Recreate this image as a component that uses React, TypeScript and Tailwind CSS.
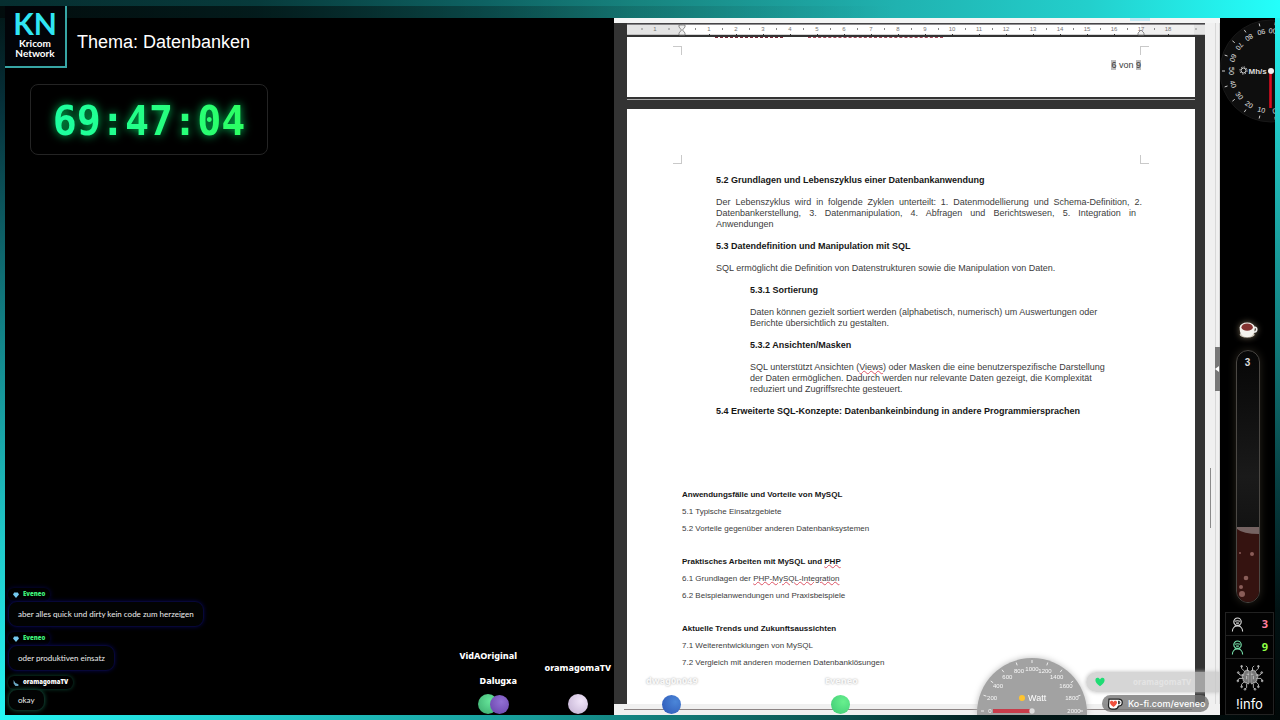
import React from "react";

const sans = "font-['Liberation_Sans',Arial,sans-serif]";
const ui = "font-['Noto_Sans','Open_Sans',sans-serif]";

function Logo() {
  return (
    <div className="absolute left-[5px] top-[6px] z-10 flex h-[62px] w-[62px] flex-col items-center border-b-2 border-r-2 border-[#37a5a5] bg-[#020408] font-['Lato',sans-serif] font-bold text-white">
      <span className="mt-[2px] text-[30px] leading-[30px] text-[#30e6f4]">KN</span>
      <span className="text-[10px] leading-[10px]">Kricom</span>
      <span className="text-[10px] leading-[10px]">Network</span>
    </div>
  );
}

function Ruler() {
  return (
    <svg viewBox="0 0 578 14" className="block h-[14px] w-full" preserveAspectRatio="xMinYMid slice" aria-hidden="true">
      <rect width="578" height="14" fill="#e4e4e4" />
      <rect x="55" y="1" width="459" height="11" fill="#fff" />
      <rect x="514" y="1" width="53" height="11" fill="#f0f0f0" />
      <rect y="0" width="578" height="1.6" fill="#474548" />
      <rect y="11.8" width="578" height="2.2" fill="#333" />
      {Array.from({ length: 18 }, (_, i) => i + 1).map((n) => (
        <g key={n}>
          <text x={55 + n * 27} y="8" textAnchor="middle" fontSize="6" fill="#777" fontFamily="Liberation Sans">
            {n}
          </text>
          <rect x={55 + n * 27 - 14} y="5" width="1" height="2" fill="#888" />
          <rect x={55 + n * 27} y="11" width="1" height="1" fill="#333" />
        </g>
      ))}
      <text x="28" y="8" textAnchor="middle" fontSize="6" fill="#777" fontFamily="Liberation Sans">1</text>
      <path d="M15 5v2M42 5v2M569 5v2" stroke="#888" />
      <path d="M52 2h6v2l-2.500 3 2.500 3v2h-6v-2l2.500-3-2.500-3z" fill="#eee" stroke="#777" strokeWidth=".8" />
      <path d="M511 12v-2l3-3 3 3v2z" fill="#eee" stroke="#777" strokeWidth=".8" />
    </svg>
  );
}

function Corner({ className }: { className: string }) {
  return <span className={`block size-[9px] border-[#c9c9c9] ${className}`} />;
}

const typo = "underline decoration-[#dd5566] decoration-wavy decoration-1 underline-offset-0";

function DocumentView() {
  return (
    <section className={`relative flex min-w-0 flex-col overflow-hidden bg-[#f0f0f0] text-[#3c3c3c] ${sans}`}>
      <div className="h-[5px] shrink-0 bg-[#f4f5f5]">
        <div className="ml-auto mr-[70px] h-[3px] w-[20px] bg-[#c2e8f3]" />
      </div>
      <div className="flex flex-1">
        <div className="flex min-w-0 flex-1 flex-col bg-[#333]">
          <div className="ml-[13px]">
            <Ruler />
          </div>
          <div className="ml-[13px] mr-[10px] flex h-[60px] shrink-0 flex-col bg-white px-[46px]">
            <div className="ml-[42px] flex h-[2px] gap-[25px]">
              <span className="w-[68px] border-t border-dashed border-[#7a2a3a]" />
              <span className="w-[135px] border-t border-dashed border-[#a4485a]" />
            </div>
            <div className="mt-[7px] flex justify-between">
              <Corner className="border-r border-t" />
              <Corner className="border-l border-t" />
            </div>
            <p className="mt-[5px] pr-[8px] text-right text-[9px] leading-[11px]">
              <span className="bg-[#bdbdbd]">6</span> von <span className="bg-[#bdbdbd]">9</span>
            </p>
          </div>
          <div className="ml-[13px] mr-[10px] mt-[2px] h-px bg-[#aaa]" />
          <article className="ml-[13px] mr-[10px] mt-[9px] flex-1 bg-white px-[46px] pt-[46px]">
            <div className="flex justify-between">
              <Corner className="border-b border-r" />
              <Corner className="border-b border-l" />
            </div>
            <div className="ml-[43px] w-[426px] whitespace-nowrap pt-[11px] text-[9px] leading-[11px] [&_h2]:font-bold [&_h2]:text-[#161616] [&_h3]:font-bold [&_h3]:text-[#161616]">
              <h2>5.2 Grundlagen und Lebenszyklus einer Datenbankanwendung</h2>
              <div className="mt-[11px]">
                <p className="[text-align-last:justify]">
                  Der Lebenszyklus wird in folgende Zyklen unterteilt: 1. Datenmodellierung und Schema-Definition, 2.
                </p>
                <p className="mr-[6px] [text-align-last:justify]">
                  Datenbankerstellung, 3. Datenmanipulation, 4. Abfragen und Berichtswesen, 5. Integration in
                </p>
                <p>Anwendungen</p>
              </div>
              <h2 className="mt-[11px]">5.3 Datendefinition und Manipulation mit SQL</h2>
              <p className="mt-[11px]">SQL ermöglicht die Definition von Datenstrukturen sowie die Manipulation von Daten.</p>
              <div className="ml-[34px]">
                <h3 className="mt-[11px]">5.3.1 Sortierung</h3>
                <p className="mt-[11px]">
                  Daten können gezielt sortiert werden (alphabetisch, numerisch) um Auswertungen oder
                  <br />
                  Berichte übersichtlich zu gestalten.
                </p>
                <h3 className="mt-[11px]">5.3.2 Ansichten/Masken</h3>
                <p className="mt-[11px]">
                  SQL unterstützt Ansichten (<span className={typo}>Views</span>) oder Masken die eine benutzerspezifische Darstellung
                  <br />
                  der Daten ermöglichen. Dadurch werden nur relevante Daten gezeigt, die Komplexität
                  <br />
                  reduziert und Zugriffsrechte gesteuert.
                </p>
              </div>
              <h2 className="mt-[11px]">5.4 Erweiterte SQL-Konzepte: Datenbankeinbindung in andere Programmiersprachen</h2>
            </div>
            <div className="ml-[9px] mt-[69px] text-[8px] leading-[17px] [&_h2]:font-bold [&_h2]:text-[#161616] [&_h2:not(:first-child)]:mt-[16px]">
              <h2>Anwendungsfälle und Vorteile von MySQL</h2>
              <p>5.1 Typische Einsatzgebiete</p>
              <p>5.2 Vorteile gegenüber anderen Datenbanksystemen</p>
              <h2>
                Praktisches Arbeiten mit MySQL und <span className={typo}>PHP</span>
              </h2>
              <p>
                6.1 Grundlagen der <span className={typo}>PHP-MySQL-Integration</span>
              </p>
              <p>6.2 Beispielanwendungen und Praxisbeispiele</p>
              <h2>Aktuelle Trends und Zukunftsaussichten</h2>
              <p>7.1 Weiterentwicklungen von MySQL</p>
              <p>7.2 Vergleich mit anderen modernen Datenbanklösungen</p>
            </div>
          </article>
        </div>
        <div className="relative w-[15px] border-r border-[#d5d5d5] bg-[#f0f0f0]">
          <div className="ml-[10px] h-full w-px bg-[#d8d8d8]" />
          <div className="absolute left-[5px] top-[445px] h-[60px] w-px bg-[#8a8a8a]" />
          <div className="absolute -right-px top-[324px] flex h-[44px] w-[5px] items-center bg-[#777] text-white">
            <svg viewBox="0 0 4 6" className="h-[6px] w-[4px]"><path d="M4 0v6L0 3z" fill="#fff" /></svg>
          </div>
        </div>
      </div>
      <div className="flex h-[11px] shrink-0 items-center bg-[#f0f0f0] pl-[10px] pr-[28px]">
        <div className="h-px w-full bg-[#8c8484]" />
      </div>
      <span className={`absolute bottom-[29px] left-[32px] text-[9px] leading-[11px] font-extrabold text-[#f8f8f8] [text-shadow:0_0_2px_#aaa] ${ui}`}>dwag0n049</span>
      <span className="absolute bottom-px left-[48px] size-[19px] rounded-full bg-[radial-gradient(circle_at_70%_35%,#4b86d8,#2c55b5)]" />
      <span className={`absolute bottom-[29px] left-[211px] text-[9px] leading-[11px] font-extrabold text-[#f8f8f8] [text-shadow:0_0_2px_#aaa] ${ui}`}>Eveneo</span>
      <span className="absolute bottom-px left-[217px] size-[19px] rounded-full bg-[radial-gradient(circle_at_65%_35%,#68f08e,#3cc873)]" />
      <div className="absolute bottom-0 right-[132px]">
        <WattGauge />
      </div>
      <div className={`absolute bottom-[23px] right-0 flex h-[20px] w-[134px] items-center rounded-l-full bg-[#c8c8c8]/75 pl-[9px] shadow-[0_0_4px_#bbb] ${ui}`}>
        <svg viewBox="0 0 24 24" className="size-[10px]" fill="#1fdc74"><path d="M12 22C4 15 1 12 1 7.500 1 1 9 0 12 6c3-6 11-5 11 1.500C23 12 20 15 12 22z" /></svg>
        <span className="ml-[28px] text-[8px] font-bold text-[#e4e4e4]">oramagomaTV</span>
      </div>
      <a href="https://ko-fi.com/eveneo" className="absolute bottom-[3px] right-[11px] flex h-[17px] w-[107px] items-center rounded-full bg-[#777]/80 pl-[5px] font-['Inter',sans-serif] text-[9px] font-medium text-white">
        <svg viewBox="0 0 30 24" className="h-[12px] w-[16px] shrink-0">
          <path d="M3 2h19c10 0 10 14 0 14-1 4-3 6-7 6H9c-5 0-7-3-7-7z" fill="#fff" stroke="#222" strokeWidth="2.500" />
          <path d="M22 6c4 0 4 6 0 6z" fill="#777" stroke="#222" strokeWidth="1.500" />
          <path d="M12 18C7 14 5 12 5 9c0-4 5-5 7-1 2-4 7-3 7 1 0 3-2 5-7 9z" fill="#f0513e" />
        </svg>
        <span className="ml-[5px] whitespace-nowrap">Ko-fi.com/eveneo</span>
      </a>
    </section>
  );
}

function polar(cx: number, cy: number, r: number, deg: number) {
  const a = (deg * Math.PI) / 180;
  return { x: cx + r * Math.cos(a), y: cy - r * Math.sin(a) };
}

function WattGauge() {
  const labels = ["0", "200", "400", "600", "800", "1000", "1200", "1400", "1600", "1800", "2000"];
  return (
    <svg viewBox="0 0 112 58" className="block h-[58px] w-[112px] drop-shadow-[0_0_3px_#bbb]" fontFamily="Liberation Sans">
      <circle cx="56" cy="56" r="55" fill="#a2a2a2" />
      {labels.map((l, i) => {
        const deg = 180 - i * 18;
        const p = polar(56, 54, 42, deg);
        const a = polar(56, 54, 48, deg);
        const b = polar(56, 54, 51, deg);
        return (
          <g key={l}>
            <path d={`M${a.x} ${a.y}L${b.x} ${b.y}`} stroke="#fff" strokeWidth=".8" />
            <text x={p.x} y={p.y + 2} textAnchor="middle" fontSize="6" fill="#f8f8f8">{l}</text>
          </g>
        );
      })}
      <rect x="17" y="52" width="38" height="4" fill="#c83c4a" />
      <circle cx="56" cy="54" r="2.700" fill="#ddd" />
      <circle cx="46" cy="41" r="3" fill="#ffc42e" />
      <text x="52" y="44" fontSize="9" fill="#fff">Watt</text>
    </svg>
  );
}

function HashGauge() {
  return (
    <svg viewBox="0 0 55 112" className="block h-[112px] w-[55px]" fontFamily="Liberation Sans">
      <circle cx="51" cy="53" r="51" fill="#0e0e0e" stroke="#181818" />
      {Array.from({ length: 11 }, (_, i) => {
        const turn = i * 19 - 5;
        const deg = 270 - turn;
        const p = polar(51, 53, 40, deg);
        const a = polar(51, 53, 46, deg);
        const b = polar(51, 53, 49, deg);
        return (
          <g key={i}>
            <path d={`M${a.x} ${a.y}L${b.x} ${b.y}`} stroke="#ccc" />
            <g transform={`translate(${p.x} ${p.y}) rotate(${turn})`}>
              <text y="2.500" textAnchor="middle" fontSize="7" fill="#e4e4e4">{i * 10}</text>
            </g>
          </g>
        );
      })}
      <path d="M50.500 53v37" stroke="#d90d20" strokeWidth="2.600" />
      <circle cx="51" cy="53" r="3" fill="#eee" />
      <circle cx="23.500" cy="52.500" r="2.500" fill="none" stroke="#ddd" />
      <circle cx="23.500" cy="52.500" r="3.600" fill="none" stroke="#ccc" strokeDasharray="1.400 1.400" />
      <text x="28.500" y="55.500" fontSize="8" fontWeight="bold" fill="#ddd">Mh/s</text>
    </svg>
  );
}

function Person({ color }: { color: string }) {
  return (
    <svg viewBox="0 0 14 16" className="h-[15px] w-[13px]" fill="none" stroke={color} strokeWidth="1.200">
      <circle cx="7" cy="5" r="4" />
      <path d="M4 4.500q3-1.200 6 0M5.500 6.500h3M1.500 15.500c0-8 11-8 11 0M5 9l-1.500 2M9 9l1.500 2" />
    </svg>
  );
}

function Brain() {
  const half = (
    <g>
      <path d="M15 7c-3-2-6 0-6 3-3 1-3 5-1 6-1 3 2 6 4 5 1 2 3 2 3 0z" fill="#777" stroke="#ccc" />
      <path d="M10 8 6 4V1M9 12H4L2 9M8 16H3l-2 3M9 20l-3 3v3M12 22v5l-2 2M13 7V3l-2-2M15 11h-3M12 17v-4" />
      <circle cx="6" cy="1.500" r="1" /><circle cx="2" cy="9" r="1" /><circle cx="1.500" cy="19" r="1" /><circle cx="6" cy="26" r="1" /><circle cx="10" cy="29" r="1" />
    </g>
  );
  return (
    <svg viewBox="0 0 32 31" className="h-[26px] w-[28px]" fill="none" stroke="#d0d0d0" strokeWidth="1">
      {half}
      <g transform="translate(32 0) scale(-1 1)">{half}</g>
    </svg>
  );
}

function Sidebar() {
  return (
    <aside className="flex flex-col items-center overflow-hidden bg-black text-white">
      <HashGauge />
      <svg viewBox="0 0 24 22" className="mt-[191px] h-[19px] w-[20px] drop-shadow-[0_0_3px_#776a55]">
        <path d="M18 8c6-3 6 5 0 5" fill="none" stroke="#eee" strokeWidth="2" />
        <ellipse cx="11" cy="16" rx="9" ry="3.500" fill="#ccc5b8" />
        <path d="M2 8c0 7 3 11 9 11s9-4 9-11z" fill="#f4f2ed" />
        <ellipse cx="11" cy="7" rx="9" ry="5.500" fill="#f4f2ed" />
        <ellipse cx="11" cy="7" rx="6.800" ry="4.400" fill="#843331" />
      </svg>
      <div className="relative mt-[10px] flex h-[253px] w-[24px] flex-col justify-between overflow-hidden rounded-full border border-[#4b4844] bg-gradient-to-b from-[#070707] via-[#1a1a1a] to-[#080808] shadow-[0_0_9px_#28241c]">
        <span className={`mt-[5px] text-center text-[10px] leading-[13px] font-bold text-[#ddd] ${sans}`}>3</span>
        <svg viewBox="0 0 22 76" className="h-[76px] w-[22px]">
          <path d="M0 3h22v73H0z" fill="#351310" />
          <path d="M0 1h22v7Q6 8 0 3z" fill="#756362" />
          <g fill="#8a5d58"><circle cx="15" cy="28" r="2" /><circle cx="9" cy="52" r="2.300" /><circle cx="3" cy="27" r="1" /><circle cx="4" cy="61" r="2" /><circle cx="5" cy="68" r="3" /></g>
        </svg>
      </div>
      <div className="mr-px mt-auto flex w-[49px] flex-col self-end border border-[#222] bg-[#030303]">
        <div className="flex h-[23px] items-center justify-between border-b border-[#222] px-[5px]">
          <Person color="#dedede" />
          <span className={`text-[11px] font-bold text-[#ff7f9f] ${ui}`}>3</span>
        </div>
        <div className="flex h-[23px] items-center justify-between border-b border-[#222] px-[5px]">
          <Person color="#79e6ae" />
          <span className={`text-[11px] font-bold text-[#8dff45] ${ui}`}>9</span>
        </div>
        <div className="flex h-[55px] flex-col items-center pt-[6px]">
          <Brain />
          <span className="mt-[6px] font-['Inter',sans-serif] text-[13px] leading-[15px]">!info</span>
        </div>
      </div>
    </aside>
  );
}

type Message = { name: string; text: string; own?: boolean };
const messages: Message[] = [
  { name: "Eveneo", text: "aber alles quick und dirty kein code zum herzeigen" },
  { name: "Eveneo", text: "oder produktiven einsatz" },
  { name: "oramagomaTV", text: "okay", own: true },
];

function Chat() {
  return (
    <ul className="absolute bottom-[4px] left-[3px] flex flex-col gap-[5px] font-['Lato',sans-serif]">
      {messages.map((m) => (
        <li key={m.text} className="flex flex-col items-start">
          <div className={`flex h-[13px] items-center gap-[4px] rounded-md px-[5px] ${m.own ? "shadow-[0_0_4px_#0d4a35]" : "shadow-[0_0_5px_#06064a]"}`}>
            <svg viewBox="0 0 10 10" className="size-[6px]">
              {m.own ? <path d="M1 0l3 5 5 2v3H4L1 6z" fill="#6aa9c4" /> : <path d="M2 1h6l2 3-5 6-5-6z" fill="#74c9ef" />}
            </svg>
            <span className={`text-[6px] font-black ${ui} ${m.own ? "text-white" : "text-[#3ff07b]"}`}>{m.name}</span>
          </div>
          <p className={`flex items-center rounded-[9px] border bg-[#020303] px-[9px] text-[8px] leading-[12px] text-[#ededed] ${m.own ? "h-[22px] border-[#0c2c22] shadow-[0_0_4px_#0d4a35]" : "h-[26px] border-[#070738] shadow-[0_0_4px_#06064a]"}`}>
            {m.text}
          </p>
        </li>
      ))}
    </ul>
  );
}

function StagePanel() {
  return (
    <main className="relative min-w-0 overflow-hidden bg-black text-white">
      <h1 className={`ml-[72px] mt-[12px] text-[18px] leading-[24px] ${sans}`}>Thema: Datenbanken</h1>
      <time className="ml-[25px] mt-[30px] flex h-[71px] w-[238px] items-center justify-center rounded-lg border border-[#242424] pt-[3px] font-['DejaVu_Sans_Mono',monospace] text-[40px] leading-none font-bold">
        <span className="bg-gradient-to-r from-[#1dffa0] to-[#2cff62] bg-clip-text text-transparent [filter:drop-shadow(0_0_5px_#00c058)]">69:47:04</span>
      </time>
      <Chat />
      <div className={`text-[9px] leading-[12px] font-extrabold ${ui}`}>
        <span className="absolute bottom-[53px] right-[97px]">VidAOriginal</span>
        <span className="absolute bottom-[41px] right-[3px]">oramagomaTV</span>
        <span className="absolute bottom-[28px] right-[97px]">Dalugxa</span>
        <span className="absolute bottom-px right-[116px] size-[20px] rounded-full bg-[radial-gradient(circle_at_60%_35%,#66e59a,#39a86c)]" />
        <span className="absolute bottom-px right-[105px] size-[19px] rounded-full bg-[radial-gradient(circle_at_60%_35%,#9270d4,#6540a8)]" />
        <span className="absolute bottom-px right-[26px] size-[20px] rounded-full bg-[radial-gradient(circle_at_65%_35%,#f0e4f8,#c0aed0)]" />
      </div>
    </main>
  );
}

export default function App() {
  return (
    <div className="relative flex min-h-screen flex-col bg-black">
      <header className="flex h-[18px] shrink-0 flex-col justify-end bg-[linear-gradient(90deg,#062e30_0%,#073a3b_20%,#0e6363_38%,#17847f_50%,#20b2b0_70%,#23cfcc_85%,#24fffb_100%)]">
        <div className="h-[12px] bg-[linear-gradient(90deg,#000b_0%,#0008_20%,#0002_48%,transparent_70%)]" />
      </header>
      <Logo />
      <div className="grid flex-1 grid-cols-[5px_609fr_606fr_55px_5px]">
        <div className="bg-[linear-gradient(180deg,#03191a_0%,#062f38_12%,#128287_45%,#20c9ca_75%,#25f5f3_100%)]" />
        <StagePanel />
        <DocumentView />
        <Sidebar />
        <div className="bg-[linear-gradient(180deg,#24f2f0_0%,#20bdbb_20%,#128080_45%,#063c3f_68%,#021213_85%,#010808_100%)]" />
      </div>
      <footer className="h-[5px] shrink-0 bg-[linear-gradient(90deg,#25f5f3_0%,#21caca_20%,#179a97_42%,#0b5350_65%,#021a1a_78%,#010808_100%)]" />
    </div>
  );
}
